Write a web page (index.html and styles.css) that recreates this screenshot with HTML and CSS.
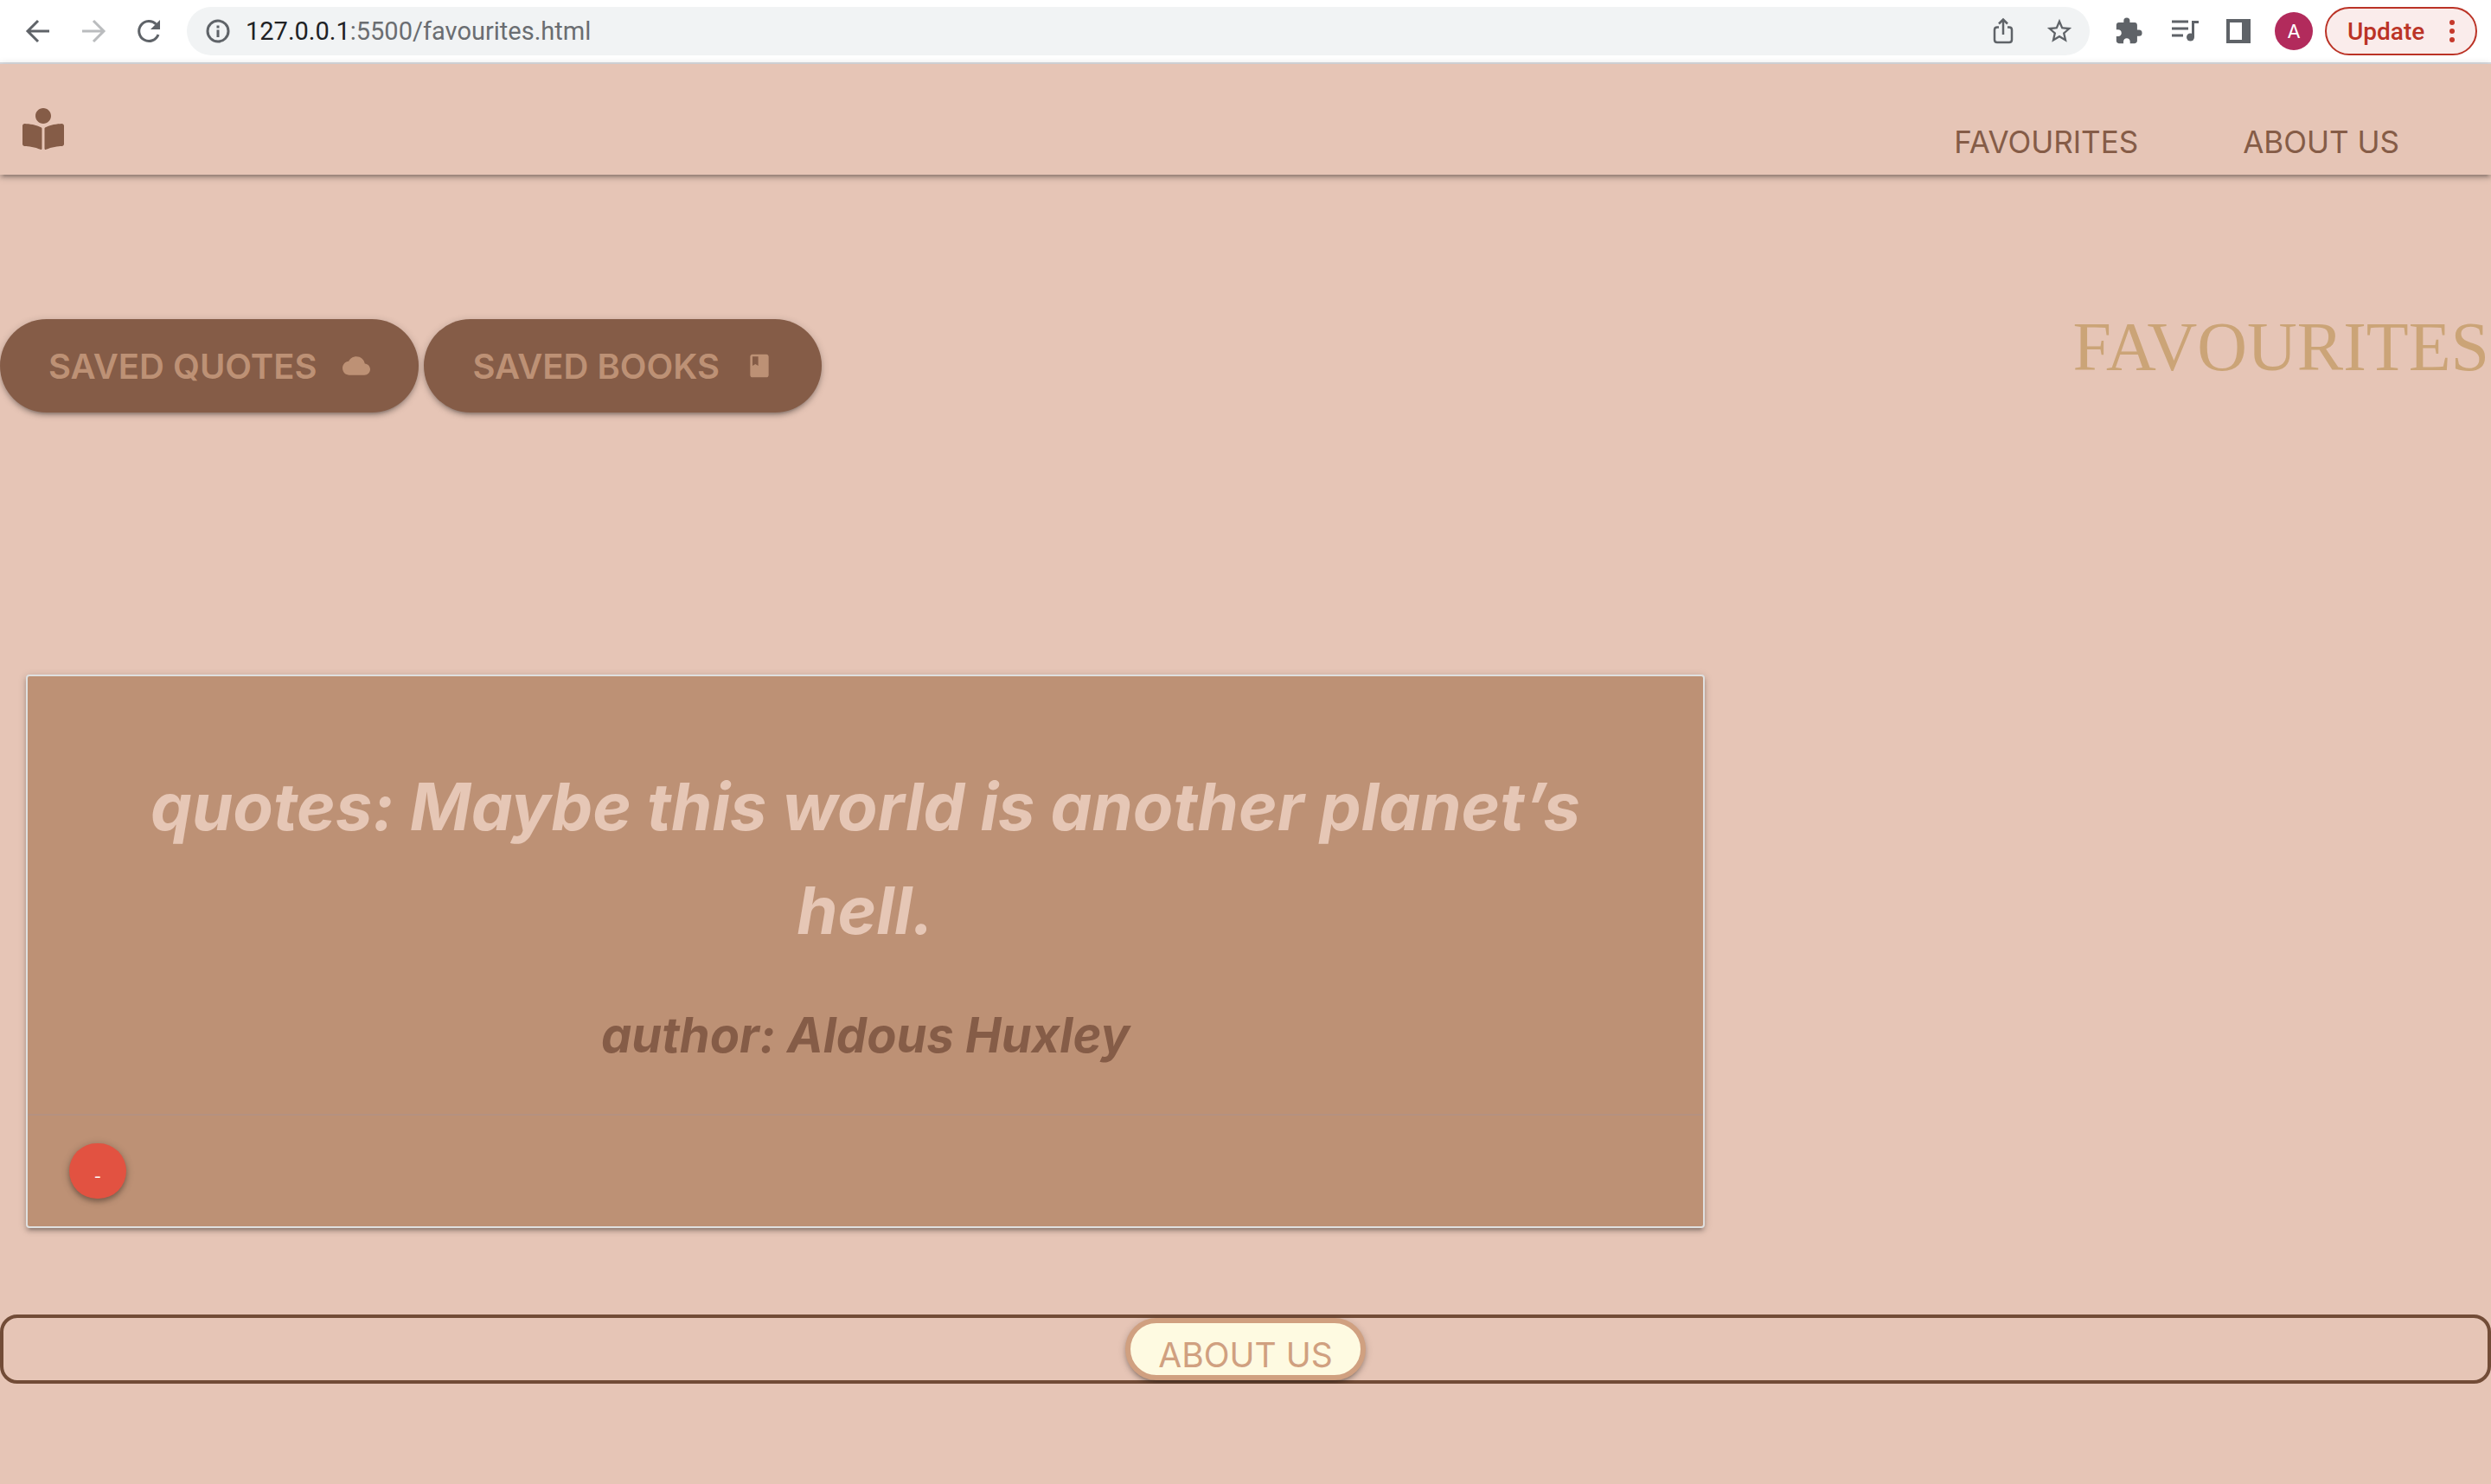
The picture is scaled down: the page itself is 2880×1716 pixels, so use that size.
FILE: index.html
```html
<!DOCTYPE html>
<html lang="en">
<head>
<meta charset="utf-8">
<title>Favourites</title>
<link rel="stylesheet" href="styles.css">
</head>
<body>
<div class="toolbar">
  <div class="nav-buttons">
    <button class="tool" aria-label="Back"><svg width="32" height="32" viewBox="0 0 32 32"><path d="M29 16H5M16 4 4 16l12 12" fill="none" stroke="#5f6368" stroke-width="3"/></svg></button>
    <button class="tool" aria-label="Forward"><svg width="32" height="32" viewBox="0 0 32 32"><path d="M3 16h24M16 4l12 12-12 12" fill="none" stroke="#babcbe" stroke-width="3"/></svg></button>
    <button class="tool" aria-label="Reload"><svg width="32" height="32" viewBox="0 0 32 32"><path d="M27 20a11.500 11.500 0 1 1-2.500-12" fill="none" stroke="#5f6368" stroke-width="3"/><path d="M29 3v11H18z" fill="#5f6368"/></svg></button>
  </div>
  <div class="address">
    <svg width="28" height="28" viewBox="0 0 28 28"><circle cx="14" cy="14" r="12" fill="none" stroke="#5f6368" stroke-width="3"/><path d="M12.500 12.500h3V21h-3zM12.500 7.500h3v3h-3z" fill="#5f6368"/></svg>
    <p class="url"><span class="host">127.0.0.1</span>:5500/favourites.html</p>
    <button class="tool" aria-label="Share"><svg width="32" height="32" viewBox="0 0 32 32"><path d="M11 11.500H9q-3 0-3 3V26q0 3 3 3h14q3 0 3-3V14.500q0-3-3-3h-2M16 20V3M11 7.500l5-5 5 5" fill="none" stroke="#5f6368" stroke-width="2.500"/></svg></button>
    <button class="tool" aria-label="Bookmark"><svg width="34" height="34" viewBox="0 0 24 24"><path fill="#5f6368" d="M22 9.240l-7.190-.620L12 2 9.190 8.630 2 9.240l5.460 4.730L5.820 21 12 17.270 18.180 21l-1.630-7.030L22 9.240zM12 15.400l-3.760 2.270 1-4.280-3.320-2.880 4.380-.380L12 6.100l1.710 4.040 4.380.380-3.320 2.880 1 4.280L12 15.400z"/></svg></button>
  </div>
  <div class="extensions">
    <button class="tool" aria-label="Extensions"><svg width="34" height="34" viewBox="0 0 24 24"><path fill="#5f6368" d="M20.500 11H19V7c0-1.100-.900-2-2-2h-4V3.500a2.500 2.500 0 0 0-5 0V5H4c-1.100 0-1.990.900-1.990 2v3.800H3.500c1.490 0 2.700 1.210 2.700 2.700s-1.210 2.700-2.700 2.700H2V20c0 1.100.900 2 2 2h3.800v-1.500c0-1.490 1.210-2.700 2.700-2.700s2.700 1.210 2.700 2.700V22H17c1.100 0 2-.900 2-2v-4h1.500a2.500 2.500 0 0 0 0-5z"/></svg></button>
    <button class="tool" aria-label="Media"><svg width="34" height="34" viewBox="0 0 34 34"><path d="M2 6h19M2 14h19M2 22h13M26.500 24V6.500H33" fill="none" stroke="#5f6368" stroke-width="3"/><circle cx="23.500" cy="24" r="4.500" fill="#5f6368"/></svg></button>
    <button class="tool" aria-label="Side panel"><svg width="28" height="28" viewBox="0 0 28 28"><path d="M0 0h28v28H0zM4 4v20h14V4z" fill="#5f6368" fill-rule="evenodd"/></svg></button>
  </div>
  <button class="avatar">A</button>
  <button class="update">Update <svg width="6" height="28" viewBox="0 0 6 28"><g fill="#c5392b"><circle cx="3" cy="4" r="3"/><circle cx="3" cy="14" r="3"/><circle cx="3" cy="24" r="3"/></g></svg></button>
</div>
<header class="site-nav">
  <a class="logo" href="#" aria-label="Home"><svg width="48" height="48" viewBox="0 0 512 512"><path fill="#855c47" d="M352 96c0-53.020-42.980-96-96-96s-96 42.980-96 96 42.980 96 96 96 96-42.980 96-96zM233.590 241.100c-59.330-36.320-155.430-46.300-203.790-49.050C13.550 191.130 0 203.510 0 219.140v222.800c0 14.330 11.590 26.280 26.490 27.050 43.660 2.290 131.990 10.680 193.040 41.430 9.370 4.720 20.480-1.710 20.480-11.870V252.560c-.010-4.670-2.320-8.950-6.420-11.460zm248.610-49.050c-48.350 2.740-144.460 12.730-203.780 49.050-4.100 2.510-6.410 6.960-6.410 11.630v245.790c0 10.190 11.140 16.630 20.540 11.900 61.040-30.720 149.320-39.110 192.970-41.400 14.900-.780 26.490-12.730 26.490-27.060V219.140c-.010-15.630-13.560-28.010-29.800-27.090z"/></svg></a>
  <nav class="links"><a href="#">FAVOURITES</a><a href="#">ABOUT US</a></nav>
</header>
<main>
  <section class="intro">
    <div class="actions">
      <button class="saved">SAVED QUOTES <svg width="32" height="32" viewBox="0 0 24 24"><path fill="#bd9175" d="M19.350 10.040C18.670 6.590 15.640 4 12 4 9.110 4 6.600 5.640 5.350 8.040 2.340 8.360 0 10.910 0 14c0 3.310 2.690 6 6 6h13c2.760 0 5-2.240 5-5 0-2.640-2.050-4.780-4.650-4.960z"/></svg></button>
      <button class="saved">SAVED BOOKS <svg width="32" height="32" viewBox="0 0 24 24"><path fill="#bd9175" d="M18 2H6c-1.100 0-2 .900-2 2v16c0 1.100.900 2 2 2h12c1.100 0 2-.900 2-2V4c0-1.100-.900-2-2-2zM6 4h5v8l-2.500-1.500L6 12V4z"/></svg></button>
    </div>
    <h1 class="title">FAVOURITES</h1>
  </section>
  <article class="card">
    <div class="card-content">
      <p class="quote">quotes: Maybe this world is another planet’s hell.</p>
      <p class="author">author: Aldous Huxley</p>
    </div>
    <div class="card-action"><button class="remove">-</button></div>
  </article>
</main>
<footer class="footer"><a class="about" href="#">ABOUT US</a></footer>
</body>
</html>
```
FILE: styles.css
```css
* { box-sizing: border-box; }
body { margin: 0; background: #e6c5b6; font-family: Inter, "Liberation Sans", sans-serif; }
h1, p { margin: 0; }
a { text-decoration: none; }
button { font-family: inherit; border: 0; padding: 0; cursor: pointer; }
svg { display: block; flex: none; }

.toolbar { display: flex; align-items: center; height: 74px; padding: 0 16px 0 28px; background: #fff; border-bottom: 2px solid #dadce0; }
.tool { background: none; display: flex; justify-content: center; align-items: center; }
.nav-buttons { display: flex; gap: 32px; margin-right: 28px; }
.address { flex: 1; display: flex; align-items: center; height: 56px; padding: 0 18px 0 22px; border-radius: 28px; background: #f1f3f4; }
.url { flex: 1; margin-left: 18px; font-family: Roboto, sans-serif; font-size: 29px; color: #6a6d71; }
.host { color: #202124; }
.address .tool + .tool { margin-left: 32px; }
.extensions { display: flex; align-items: center; gap: 31px; margin: 0 28px; }
.avatar { width: 44px; height: 44px; margin-right: 14px; border-radius: 50%; background: #b22b5c; color: #fff; font-size: 22px; }
.update { display: flex; align-items: center; justify-content: space-between; width: 176px; height: 56px; padding: 0 24px; border: 2px solid #bb3326; border-radius: 28px; background: #faeceb; color: #bb3326; font-family: Roboto, sans-serif; font-size: 28px; font-weight: 500; }

.site-nav { display: flex; justify-content: space-between; align-items: center; height: 128px; padding: 0 106px 0 26px; background: #e6c5b6; box-shadow: 0 4px 4px rgba(0, 0, 0, .14), 0 6px 2px -4px rgba(0, 0, 0, .12), 0 2px 10px rgba(0, 0, 0, .2); }
.logo { margin-top: 22px; }
.links { display: flex; gap: 121px; margin-top: 52px; }
.links a { color: #855c47; font-size: 35px; line-height: 40px; }

.intro { display: flex; justify-content: space-between; margin-top: 158px; padding: 9px 2px 0 0; }
.actions { display: flex; gap: 6px; }
.saved { display: flex; align-items: center; gap: 30px; height: 108px; padding: 0 56px; border-radius: 54px; background: #855c47; color: #bd9175; font-size: 40px; font-weight: 600; box-shadow: 0 4px 4px rgba(0, 0, 0, .14), 0 6px 2px -4px rgba(0, 0, 0, .12), 0 2px 10px rgba(0, 0, 0, .2); }
.title { color: #cba477; font-family: "Liberation Serif", serif; font-size: 80px; line-height: 64px; font-weight: 400; }

.card { width: 67.4%; margin: 303px 0 100px 30px; border: 2px solid #e0e0e0; border-radius: 4px; background: #bd9175; box-shadow: 0 4px 4px rgba(0, 0, 0, .14), 0 6px 2px -4px rgba(0, 0, 0, .12), 0 2px 10px rgba(0, 0, 0, .2); }
.card-content { padding: 90px 96px 46px; text-align: center; font-style: italic; }
.quote { color: #e6c7b6; font-size: 76px; line-height: 120px; font-weight: 700; }
.author { margin-top: 40px; color: #855c47; font-size: 56px; line-height: 90px; font-weight: 700; }
.card-action { padding: 32px 48px; border-top: 2px solid #b59180; }
.remove { display: block; width: 66px; height: 64px; padding-top: 12px; border-radius: 33px; background: #e25241; color: #fff; font-size: 18px; box-shadow: 0 4px 4px rgba(0, 0, 0, .14), 0 2px 10px rgba(0, 0, 0, .3); }

.footer { display: flex; justify-content: center; height: 80px; border: 4px solid #724c37; border-radius: 20px; }
.about { height: 72px; padding: 12px 32px 0; border: 6px solid #d0a080; border-radius: 36px; background: #fefae1; color: #d0a080; font-size: 39px; line-height: 50px; box-shadow: 0 4px 4px rgba(0, 0, 0, .14), 0 6px 2px -4px rgba(0, 0, 0, .12), 0 2px 10px rgba(0, 0, 0, .2); }
```
